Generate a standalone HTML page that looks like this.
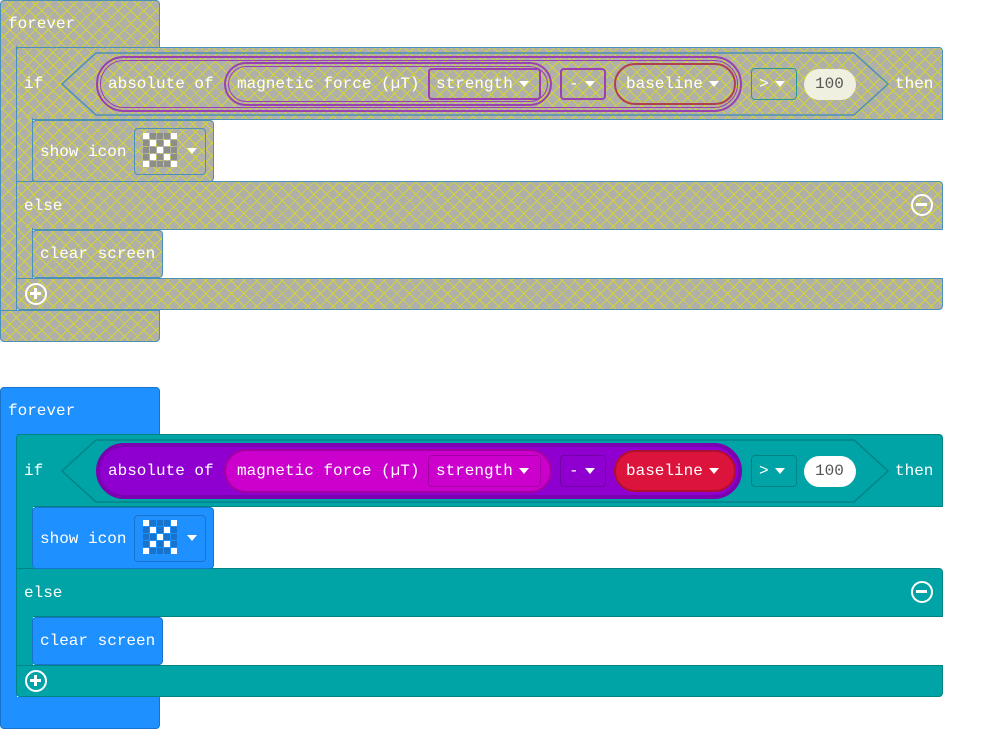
<!DOCTYPE html>
<html><head><meta charset="utf-8"><style>
*{box-sizing:border-box;margin:0;padding:0}
body{width:994px;height:729px;background:#fff;position:relative;overflow:hidden;font-family:"Liberation Mono",monospace;font-size:16px;color:#fff}
.a{position:absolute}
.t{position:absolute;line-height:20px;white-space:nowrap}
.blue{background:#1e90ff;border:1px solid #1873cc}
.teal{background:#00a4a6;border:1px solid #008385}
.pur{background:#8f00d0;border:2px solid #7300a8}
.mag{background:#cc00cc;border:2px solid #a300a3}
.red{background:#dc143c;border:2px solid #b01030}
.dd{border:1px solid rgba(0,0,0,.2);border-radius:4px}
.h{background-color:#b0b0aa;background-image:repeating-linear-gradient(45deg,rgba(215,215,40,.9) 0 1px,transparent 1px 9px),repeating-linear-gradient(-45deg,rgba(215,215,40,.9) 0 1px,transparent 1px 9px)}
.hb{border:1px solid #4a90b8}
.hp{border:2px solid #9a40b0}
.hr{border:2px solid #b04050}
.tri{display:inline-block;width:0;height:0;border-left:5px solid transparent;border-right:5px solid transparent;border-top:6px solid #fff;vertical-align:middle;margin-left:6px}
.circ{position:absolute;width:22px;height:22px;border:2.5px solid #fff;border-radius:50%}
.grid{position:absolute;display:grid;grid-template-columns:repeat(5,6px);gap:1px}
.grid i{width:6px;height:6px;background:#1873cc}
.grid.g i{background:#8e8e88}
.grid i.o,.grid.g i.o{background:#fff}
</style></head><body>

<!-- ===== TOP (hatched) copy ===== -->
<div class="a h hb" style="left:0;top:0;width:160px;height:48px;border-radius:4px 4px 0 0"></div>
<div class="a h hb" style="left:0;top:46px;width:17px;height:266px;border-top:none;border-bottom:none"></div>
<div class="a h hb" style="left:0;top:310px;width:160px;height:32px;border-radius:0 0 4px 4px"></div>
<div class="t" style="left:8px;top:14px">forever</div>

<div class="a h hb" style="left:16px;top:47px;width:927px;height:73px;border-radius:4px 4px 0 0"></div>
<div class="a h hb" style="left:16px;top:118px;width:17px;height:66px;border-top:none;border-bottom:none"></div>
<div class="a h hb" style="left:16px;top:181px;width:927px;height:49px;border-radius:0 4px 0 0"></div>
<div class="a h hb" style="left:16px;top:228px;width:17px;height:52px;border-top:none;border-bottom:none"></div>
<div class="a h hb" style="left:16px;top:278px;width:927px;height:32px;border-radius:0 0 4px 4px"></div>
<svg class="a" style="left:60px;top:51px" width="830" height="66"><polygon points="2,33 36,2 794,2 828,33 794,64 36,64" fill="none" stroke="#4a90b8" stroke-width="1.5"/></svg>
<div class="t" style="left:24px;top:74px">if</div>
<div class="t" style="left:895px;top:74px">then</div>
<div class="a h hp" style="left:96px;top:56px;width:646px;height:56px;border-radius:28px"></div>
<div class="a hp" style="left:100px;top:60px;width:638px;height:48px;border-radius:24px;border-width:1px"></div>
<div class="t" style="left:108px;top:74px">absolute of</div>
<div class="a h hp" style="left:224px;top:62px;width:328px;height:44px;border-radius:22px"></div>
<div class="a hp" style="left:228px;top:66px;width:320px;height:36px;border-radius:18px;border-width:1px"></div>
<div class="t" style="left:237px;top:74px">magnetic force (µT)</div>
<div class="a h hp" style="left:428px;top:68px;width:113px;height:32px;border-radius:4px"></div>
<div class="t" style="left:436px;top:74px">strength<span class="tri"></span></div>
<div class="a h hp" style="left:560px;top:68px;width:46px;height:32px;border-radius:4px"></div>
<div class="t" style="left:569px;top:74px">-<span class="tri"></span></div>
<div class="a h hr" style="left:614px;top:63px;width:122px;height:42px;border-radius:21px"></div>
<div class="t" style="left:626px;top:74px">baseline<span class="tri"></span></div>
<div class="a h" style="left:751px;top:68px;width:46px;height:32px;border-radius:4px;border:1.5px solid #2a9a90"></div>
<div class="t" style="left:759px;top:74px">&gt;<span class="tri"></span></div>
<div class="a" style="left:804px;top:69px;width:52px;height:31px;border-radius:16px;background:#f0f0e0"></div>
<div class="t" style="left:815px;top:74px;color:#555">100</div>

<div class="a h hb" style="left:32px;top:120px;width:182px;height:62px;border-radius:4px"></div>
<div class="t" style="left:40px;top:142px">show icon</div>
<div class="a h hb" style="left:134px;top:128px;width:72px;height:47px;border-radius:4px"></div>
<div class="grid g" style="left:143px;top:133px">
<i class="o"></i><i></i><i></i><i></i><i class="o"></i>
<i></i><i class="o"></i><i></i><i class="o"></i><i></i>
<i></i><i></i><i class="o"></i><i></i><i></i>
<i></i><i class="o"></i><i></i><i class="o"></i><i></i>
<i class="o"></i><i></i><i></i><i></i><i class="o"></i>
</div>
<span class="tri a" style="left:181px;top:148px"></span>
<div class="t" style="left:24px;top:196px">else</div>
<div class="circ" style="left:911px;top:194px"><div class="a" style="left:3px;top:7px;width:11px;height:3px;background:#fff"></div></div>
<div class="a h hb" style="left:32px;top:230px;width:131px;height:48px;border-radius:4px"></div>
<div class="t" style="left:40px;top:244px">clear screen</div>
<div class="circ" style="left:25px;top:283px"><div class="a" style="left:3px;top:7px;width:11px;height:3px;background:#fff"></div><div class="a" style="left:7px;top:3px;width:3px;height:11px;background:#fff"></div></div>

<!-- ===== BOTTOM (coloured) copy ===== -->
<div class="a blue" style="left:0;top:387px;width:160px;height:48px;border-radius:4px 4px 0 0"></div>
<div class="a" style="left:0;top:434px;width:17px;height:266px;background:#1e90ff;border-left:1px solid #1873cc"></div>
<div class="a blue" style="left:0;top:697px;width:160px;height:32px;border-radius:0 0 4px 4px;border-top:none"></div>
<div class="t" style="left:8px;top:401px">forever</div>

<div class="a teal" style="left:16px;top:434px;width:927px;height:73px;border-radius:4px 4px 0 0"></div>
<div class="a" style="left:16px;top:506px;width:17px;height:64px;background:#00a4a6;border-left:1px solid #008385"></div>
<div class="a teal" style="left:16px;top:568px;width:927px;height:49px;border-radius:0 4px 0 0"></div>
<div class="a" style="left:16px;top:616px;width:17px;height:50px;background:#00a4a6;border-left:1px solid #008385"></div>
<div class="a teal" style="left:16px;top:665px;width:927px;height:32px;border-radius:0 0 4px 4px"></div>
<svg class="a" style="left:60px;top:438px" width="830" height="66"><polygon points="2,33 36,2 794,2 828,33 794,64 36,64" fill="#00a4a6" stroke="#008385" stroke-width="1.5"/></svg>
<div class="t" style="left:24px;top:461px">if</div>
<div class="t" style="left:895px;top:461px">then</div>
<div class="a pur" style="left:96px;top:443px;width:646px;height:56px;border-radius:28px;border-width:4px;border-color:#7a00b0"></div>
<div class="t" style="left:108px;top:461px">absolute of</div>
<div class="a mag" style="left:224px;top:449px;width:328px;height:44px;border-radius:22px"></div>
<div class="t" style="left:237px;top:461px">magnetic force (µT)</div>
<div class="a dd" style="left:428px;top:455px;width:113px;height:32px"></div>
<div class="t" style="left:436px;top:461px">strength<span class="tri"></span></div>
<div class="a dd" style="left:560px;top:455px;width:46px;height:32px"></div>
<div class="t" style="left:569px;top:461px">-<span class="tri"></span></div>
<div class="a red" style="left:614px;top:450px;width:122px;height:42px;border-radius:21px"></div>
<div class="t" style="left:626px;top:461px">baseline<span class="tri"></span></div>
<div class="a dd" style="left:751px;top:455px;width:46px;height:32px"></div>
<div class="t" style="left:759px;top:461px">&gt;<span class="tri"></span></div>
<div class="a" style="left:804px;top:456px;width:52px;height:31px;border-radius:16px;background:#fff"></div>
<div class="t" style="left:815px;top:461px;color:#555">100</div>

<div class="a blue" style="left:32px;top:507px;width:182px;height:62px;border-radius:4px"></div>
<div class="t" style="left:40px;top:529px">show icon</div>
<div class="a dd" style="left:134px;top:515px;width:72px;height:47px"></div>
<div class="grid" style="left:143px;top:520px">
<i class="o"></i><i></i><i></i><i></i><i class="o"></i>
<i></i><i class="o"></i><i></i><i class="o"></i><i></i>
<i></i><i></i><i class="o"></i><i></i><i></i>
<i></i><i class="o"></i><i></i><i class="o"></i><i></i>
<i class="o"></i><i></i><i></i><i></i><i class="o"></i>
</div>
<span class="tri a" style="left:181px;top:535px"></span>
<div class="t" style="left:24px;top:583px">else</div>
<div class="circ" style="left:911px;top:581px"><div class="a" style="left:3px;top:7px;width:11px;height:3px;background:#fff"></div></div>
<div class="a blue" style="left:32px;top:617px;width:131px;height:48px;border-radius:4px"></div>
<div class="t" style="left:40px;top:631px">clear screen</div>
<div class="circ" style="left:25px;top:670px"><div class="a" style="left:3px;top:7px;width:11px;height:3px;background:#fff"></div><div class="a" style="left:7px;top:3px;width:3px;height:11px;background:#fff"></div></div>
</body></html>
